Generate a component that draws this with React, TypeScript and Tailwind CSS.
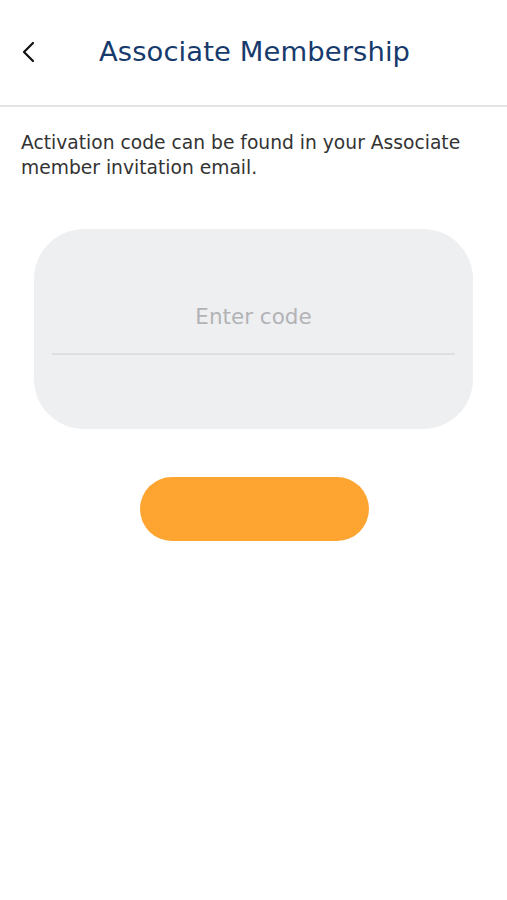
import React from "react";

export default function App() {
  return (
    <div
      className="min-h-[900px] w-full bg-white"
      style={{ fontFamily: '"DejaVu Sans", "Open Sans", sans-serif' }}
    >
      {/* Header */}
      <div className="flex h-[107px] items-center border-b-2 border-[#e4e4e6] pb-[2px]">
        <button type="button" className="ml-[19px] flex h-[24px] w-[20px] items-center justify-center">
          <svg width="16" height="24" viewBox="0 0 16 24" fill="none">
            <path d="M12 3L3 12l9 9" stroke="#111" strokeWidth="2.2" strokeLinecap="round" strokeLinejoin="round" />
          </svg>
        </button>
        <h1 className="ml-[60px] text-[27.4px] leading-none tracking-[0.1px] text-[#173a6c]">
          Associate Membership
        </h1>
      </div>

      {/* Description */}
      <p className="mt-[23px] px-[21px] text-[18.7px] leading-[25px] text-[#333]">
        Activation code can be found in your Associate member invitation email.
      </p>

      {/* Code card */}
      <div className="mx-[34px] mt-[49px] flex h-[200px] flex-col rounded-[50px] bg-[#eeeff1] px-[18px]">
        <input
          placeholder="Enter code"
          className="mt-[73px] h-[30px] w-full bg-transparent text-center text-[21.5px] text-[#333] placeholder:text-[#b3b3b6] focus:outline-none"
        />
        <div className="mt-[21px] h-[2px] bg-[#dedfe2]" />
      </div>

      {/* Submit */}
      <div className="mt-[48px] flex justify-center">
        <button
          type="button"
          className="ml-[2px] h-[64px] w-[229px] rounded-full bg-[#fea431]"
        />
      </div>
    </div>
  );
}
